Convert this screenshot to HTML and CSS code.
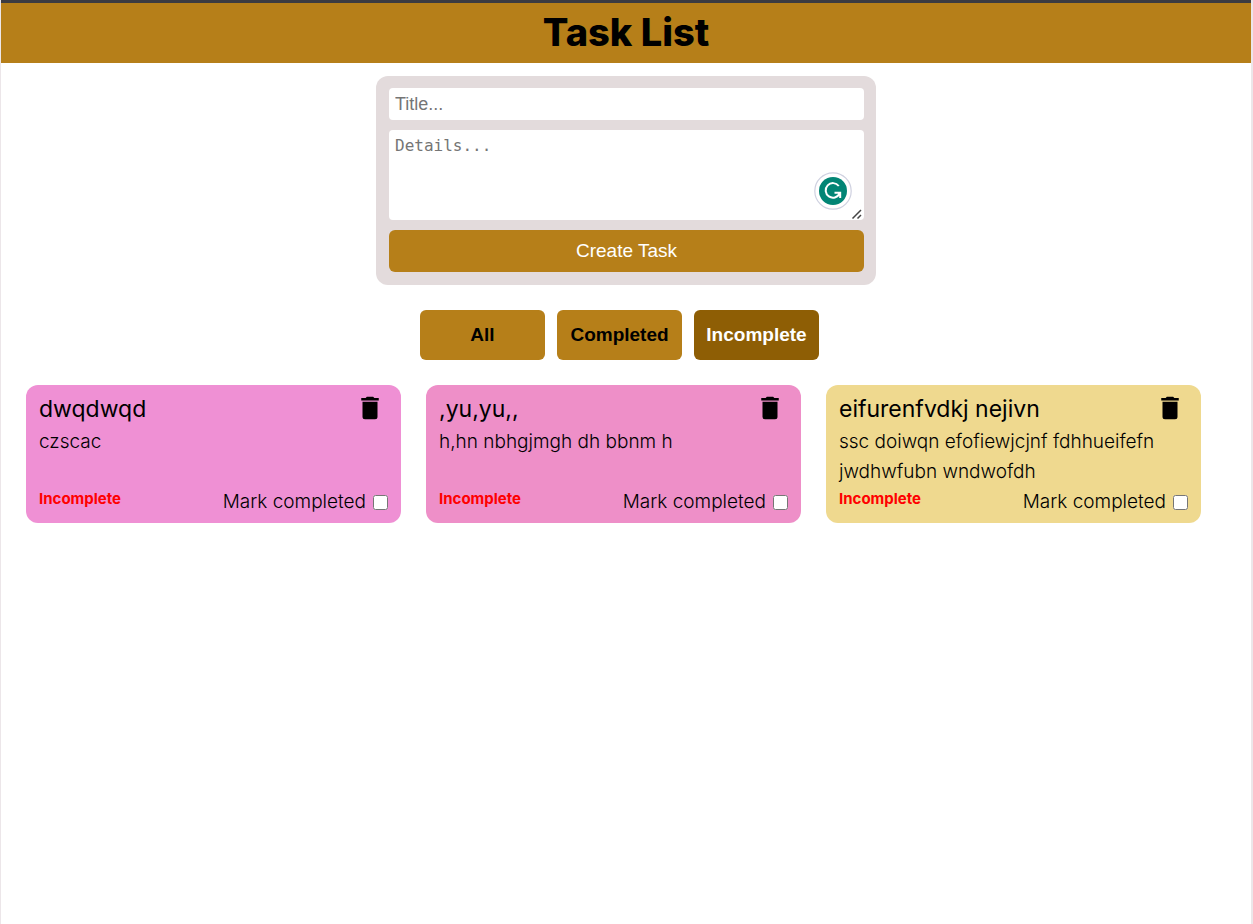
FILE: index.html
```html
<!DOCTYPE html>
<html lang="en">
<head>
<meta charset="utf-8">
<meta name="viewport" content="width=device-width, initial-scale=1">
<title>Task List</title>
<link rel="stylesheet" href="styles.css">
</head>
<body>
<header class="header"><h1 class="header-title">Task List</h1></header>
<main>
  <form class="task-form">
    <input class="field" type="text" placeholder="Title..." aria-label="Title">
    <div class="details-wrap">
      <textarea class="field details" placeholder="Details..." aria-label="Details"></textarea>
      <svg class="assistant" viewBox="0 0 38 38" aria-hidden="true">
        <circle cx="19" cy="19" r="18.2" fill="#fff" stroke="#cfd1e0" stroke-width="1.2"/>
        <circle cx="19" cy="19" r="14" fill="#028575"/>
        <path d="M24.800 14A7.300 7.300 0 1 0 25.600 21.500M20.500 20.800H26.200V26" fill="none" stroke="#fff" stroke-width="2"/>
      </svg>
      <svg class="grip" viewBox="0 0 12 12" aria-hidden="true"><path d="M1.500 10.500L10 2M6.500 10.500L10 7" fill="none" stroke="#444" stroke-width="1.500"/></svg>
    </div>
    <button class="create" type="button">Create Task</button>
  </form>
  <div class="filters">
    <button class="filter" type="button">All</button>
    <button class="filter" type="button">Completed</button>
    <button class="filter active" type="button" aria-pressed="true">Incomplete</button>
  </div>
  <section class="tasks" aria-label="Tasks">
    <article class="card orchid">
      <div class="card-head">
        <h2 class="card-title">dwqdwqd</h2>
        <button class="delete" type="button" aria-label="Delete task"><svg class="trash" viewBox="0 0 24 24" aria-hidden="true"><path d="M6 19a2 2 0 0 0 2 2h8a2 2 0 0 0 2-2V7H6v12zM19 4h-3.500l-1-1h-5l-1 1H5v2h14V4z"/></svg></button>
      </div>
      <p class="card-text">czscac</p>
      <div class="card-foot">
        <span class="status">Incomplete</span>
        <label class="mark">Mark completed <input class="check" type="checkbox"></label>
      </div>
    </article>
    <article class="card pink">
      <div class="card-head">
        <h2 class="card-title">,yu,yu,,</h2>
        <button class="delete" type="button" aria-label="Delete task"><svg class="trash" viewBox="0 0 24 24" aria-hidden="true"><path d="M6 19a2 2 0 0 0 2 2h8a2 2 0 0 0 2-2V7H6v12zM19 4h-3.500l-1-1h-5l-1 1H5v2h14V4z"/></svg></button>
      </div>
      <p class="card-text">h,hn nbhgjmgh dh bbnm h</p>
      <div class="card-foot">
        <span class="status">Incomplete</span>
        <label class="mark">Mark completed <input class="check" type="checkbox"></label>
      </div>
    </article>
    <article class="card sand">
      <div class="card-head">
        <h2 class="card-title">eifurenfvdkj nejivn</h2>
        <button class="delete" type="button" aria-label="Delete task"><svg class="trash" viewBox="0 0 24 24" aria-hidden="true"><path d="M6 19a2 2 0 0 0 2 2h8a2 2 0 0 0 2-2V7H6v12zM19 4h-3.500l-1-1h-5l-1 1H5v2h14V4z"/></svg></button>
      </div>
      <p class="card-text">ssc doiwqn efofiewjcjnf fdhhueifefn jwdhwfubn wndwofdh</p>
      <div class="card-foot">
        <span class="status">Incomplete</span>
        <label class="mark">Mark completed <input class="check" type="checkbox"></label>
      </div>
    </article>
  </section>
</main>
</body>
</html>
```
FILE: styles.css
```css
* { box-sizing: border-box; margin: 0; padding: 0; }
body {
  min-height: 100vh;
  border: solid #ece6e9;
  border-width: 0 2px 0 1px;
  background: #fff;
  color: #000;
  font-family: Inter, sans-serif;
  font-size: 19px;
}
.header {
  padding-bottom: 2px;
  border-top: 3px solid #3b3b41;
  background: #b67f19;
  text-align: center;
}
.header-title { font-size: 38px; line-height: 58px; font-weight: 800; }
.task-form {
  display: flex;
  flex-direction: column;
  gap: 10px;
  width: 500px;
  max-width: 100%;
  margin: 13px auto 25px;
  padding: 12px 12px 13px 13px;
  border-radius: 12px;
  background: #e3dbdc;
}
.field {
  display: block;
  width: 100%;
  height: 32px;
  padding: 6px;
  border: 0;
  border-radius: 4px;
  background: #fff;
  font-family: "Liberation Sans", Arial, sans-serif;
  font-size: 18px;
}
.field::placeholder { color: #757575; }
.details-wrap { position: relative; }
.details {
  height: 90px;
  resize: vertical;
  font-family: "DejaVu Sans Mono", monospace;
  font-size: 16px;
}
.details::-webkit-resizer { background: transparent; }
.assistant { position: absolute; right: 12px; bottom: 10px; width: 38px; height: 38px; }
.grip { position: absolute; right: 1px; bottom: 0; width: 12px; height: 12px; pointer-events: none; }
.create {
  height: 42px;
  border: 0;
  border-radius: 6px;
  background: #b67f19;
  color: #fff;
  font-family: "Liberation Sans", Arial, sans-serif;
  font-size: 19px;
}
.filters { display: flex; justify-content: center; gap: 12px; padding-right: 13px; }
.filter {
  width: 125px;
  height: 50px;
  border: 0;
  border-radius: 6px;
  background: #b67f19;
  color: #000;
  font-family: "Liberation Sans", Arial, sans-serif;
  font-size: 19px;
  font-weight: 700;
}
.filter.active { background: #8e5e05; color: #fff; }
.tasks {
  display: grid;
  grid-template-columns: repeat(auto-fill, 375px);
  gap: 25px;
  padding: 25px;
}
.card {
  display: flex;
  flex-direction: column;
  min-height: 138px;
  padding: 8px 13px 6px;
  border-radius: 12px;
}
.orchid { background: #ef90d4; }
.pink { background: #ee8fc8; }
.sand { background: #efd98f; }
.card-head { display: flex; justify-content: space-between; }
.card-title { font-size: 23px; line-height: 33px; font-weight: 400; }
.delete { width: 30px; height: 30px; margin-right: 3px; border: 0; background: none; }
.trash { display: block; width: 30px; height: 30px; }
.card-text { padding-top: 1px; line-height: 30px; font-weight: 300; }
.card-foot { display: flex; justify-content: space-between; margin-top: auto; }
.status { color: #f00; font-size: 15px; line-height: 24px; font-weight: 700; }
.mark { display: flex; align-items: center; gap: 7px; line-height: 30px; font-weight: 300; }
.check { width: 15px; height: 15px; }
```
